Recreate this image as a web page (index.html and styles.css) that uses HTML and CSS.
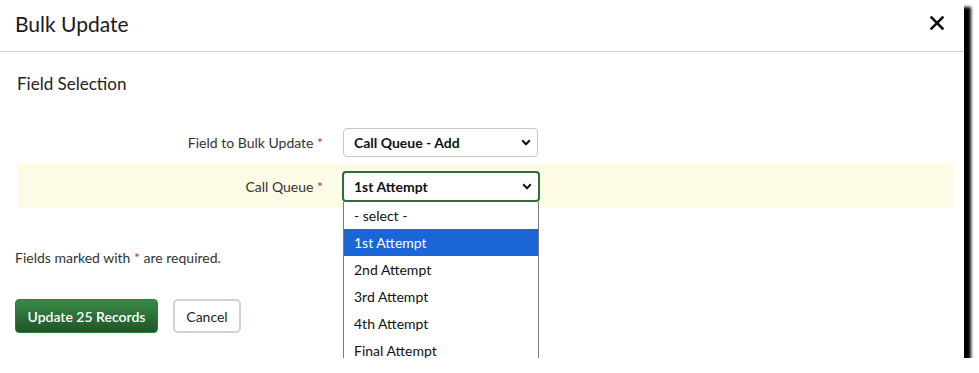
FILE: index.html
```html
<!DOCTYPE html>
<html lang="en">
<head>
  <meta charset="UTF-8">
  <title>Bulk Update</title>
  <link rel="stylesheet" href="styles.css">
</head>
<body>
  <div class="dialog">
    <div class="dialog-header">
      <h1>Bulk Update</h1>
      <span class="close">
        <svg width="14" height="14" viewBox="0 0 14 14"><path d="M1.5 1.5 L12.5 12.5 M12.5 1.5 L1.5 12.5" stroke="#111" stroke-width="2.6" stroke-linecap="square"/></svg>
      </span>
    </div>

    <div class="dialog-body">
      <h2>Field Selection</h2>

      <div class="form-row">
        <label>Field to Bulk Update <span class="req">*</span></label>
        <div class="select">
          <span>Call Queue - Add</span>
          <svg class="chev" width="10" height="7" viewBox="0 0 10 7"><path d="M1.2 1.3 L5 5.2 L8.8 1.3" fill="none" stroke="#111" stroke-width="2"/></svg>
        </div>
      </div>

      <div class="form-row active">
        <label>Call Queue <span class="req">*</span></label>
        <div class="select-wrap">
          <div class="select focused">
            <span>1st Attempt</span>
            <svg class="chev" width="10" height="7" viewBox="0 0 10 7"><path d="M1.2 1.3 L5 5.2 L8.8 1.3" fill="none" stroke="#111" stroke-width="2"/></svg>
          </div>
          <ul class="options">
            <li>- select -</li>
            <li class="selected">1st Attempt</li>
            <li>2nd Attempt</li>
            <li>3rd Attempt</li>
            <li>4th Attempt</li>
            <li>Final Attempt</li>
          </ul>
        </div>
      </div>

      <p class="note">Fields marked with <span class="req">*</span> are required.</p>

      <div class="actions">
        <button class="btn btn-primary">Update 25 Records</button>
        <button class="btn btn-default">Cancel</button>
      </div>
    </div>
  </div>
</body>
</html>
```

FILE: styles.css
```css
* {
  box-sizing: border-box;
  margin: 0;
  padding: 0;
}

body {
  font-family: Lato, "Liberation Sans", sans-serif;
  background: #fff;
  color: #222;
}

/* Okno dialogu */
.dialog {
  width: 964px;
  height: 358px;
  background: #fff;
  box-shadow: 7px 7px 3px #000;
  overflow: hidden;
}

.dialog-header {
  height: 52px;
  display: flex;
  align-items: center;
  justify-content: space-between;
  padding: 0 20px 0 15px;
  border-bottom: 1px solid #cfcfcf;
}

.dialog-header h1 {
  font-size: 21px;
  font-weight: 400;
  color: #1a1a1a;
  margin-top: -4px;
}

.close {
  display: flex;
  margin-top: -6px;
}

.dialog-body {
  padding: 22px 10px 0 15px;
}

.dialog-body h2 {
  font-size: 17px;
  font-weight: 400;
  color: #222;
  margin-left: 2px;
  height: 20px;
  line-height: 20px;
}

/* Wiersze formularza */
.form-row {
  display: flex;
  align-items: center;
  height: 44px;
  margin-left: 2px;
}

.dialog-body h2 + .form-row {
  margin-top: 26px;
}

.form-row.active {
  background: #fdfbe6;
}

.form-row label {
  width: 306px;
  text-align: right;
  font-size: 14px;
  color: #333;
}

.req {
  color: #c0392b;
}

.select-wrap {
  position: relative;
  margin-left: 19px;
}

.form-row > .select {
  margin-left: 20px;
}

.select {
  width: 195px;
  height: 29px;
  display: flex;
  align-items: center;
  justify-content: space-between;
  padding: 0 6px 0 10px;
  border: 1px solid #c8c8c8;
  border-radius: 4px;
  background: #fff;
  font-size: 14px;
  font-weight: 700;
  color: #111;
}

.select.focused {
  width: 198px;
  height: 31px;
  border: 2px solid #2f6b3c;
  padding-left: 10px;
}

/* Lista opcji */
.options {
  position: absolute;
  top: 31px;
  left: 1px;
  width: 196px;
  list-style: none;
  background: #fff;
  border: 1px solid #7a7a7a;
  border-top: none;
  z-index: 2;
}

.options li {
  height: 27px;
  line-height: 27px;
  padding-left: 10px;
  font-size: 14px;
  color: #111;
}

.options li.selected {
  background: #1a66d6;
  color: #fff;
}

.note {
  font-size: 14px;
  color: #333;
  margin-top: 41px;
}

/* Przyciski */
.actions {
  display: flex;
  gap: 15px;
  margin-top: 33px;
}

.btn {
  height: 34px;
  font-family: inherit;
  font-size: 14px;
  border-radius: 4px;
  cursor: pointer;
}

.btn-primary {
  width: 143px;
  color: #fff;
  font-weight: 600;
  border: 1px solid #2f7a3d;
  background: linear-gradient(#3a8a48, #1e5528);
}

.btn-default {
  width: 68px;
  color: #222;
  background: #fff;
  border: 2px solid #cfd3da;
  border-radius: 5px;
}
```
